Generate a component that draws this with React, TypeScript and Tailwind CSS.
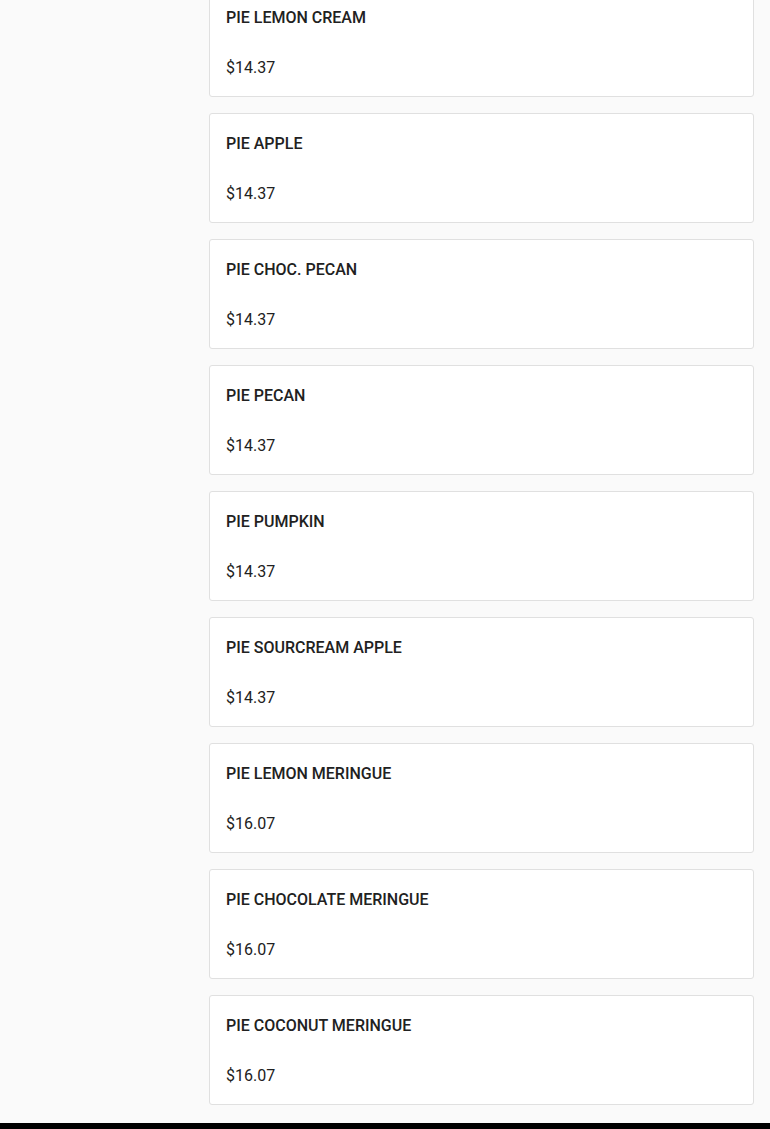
import React from "react";

const items = [
  { name: "PIE LEMON CREAM", price: "$14.37" },
  { name: "PIE APPLE", price: "$14.37" },
  { name: "PIE CHOC. PECAN", price: "$14.37" },
  { name: "PIE PECAN", price: "$14.37" },
  { name: "PIE PUMPKIN", price: "$14.37" },
  { name: "PIE SOURCREAM APPLE", price: "$14.37" },
  { name: "PIE LEMON MERINGUE", price: "$16.07" },
  { name: "PIE CHOCOLATE MERINGUE", price: "$16.07" },
  { name: "PIE COCONUT MERINGUE", price: "$16.07" },
];

export default function App() {
  return (
    <div
      className="w-[770px] h-[1129px] overflow-hidden bg-[#fafafa] flex flex-col text-[#212121]"
      style={{ fontFamily: "Roboto, 'Noto Sans', sans-serif" }}
    >
      <div className="flex flex-1 min-h-0">
        <div className="w-[209px] shrink-0" />
        <div className="flex-1 pr-4 mt-[-13px] flex flex-col gap-4">
          {items.map((it) => (
            <div
              key={it.name}
              className="h-[110px] shrink-0 bg-white border border-[#e0e0e0] rounded-[3px] px-4 pt-[18px] flex flex-col"
            >
              <div className="text-[16px] leading-[24px] font-medium">{it.name}</div>
              <div className="text-[16px] leading-[24px] mt-[26px]">{it.price}</div>
            </div>
          ))}
        </div>
      </div>
      <div className="h-[6px] bg-black shrink-0" />
    </div>
  );
}
